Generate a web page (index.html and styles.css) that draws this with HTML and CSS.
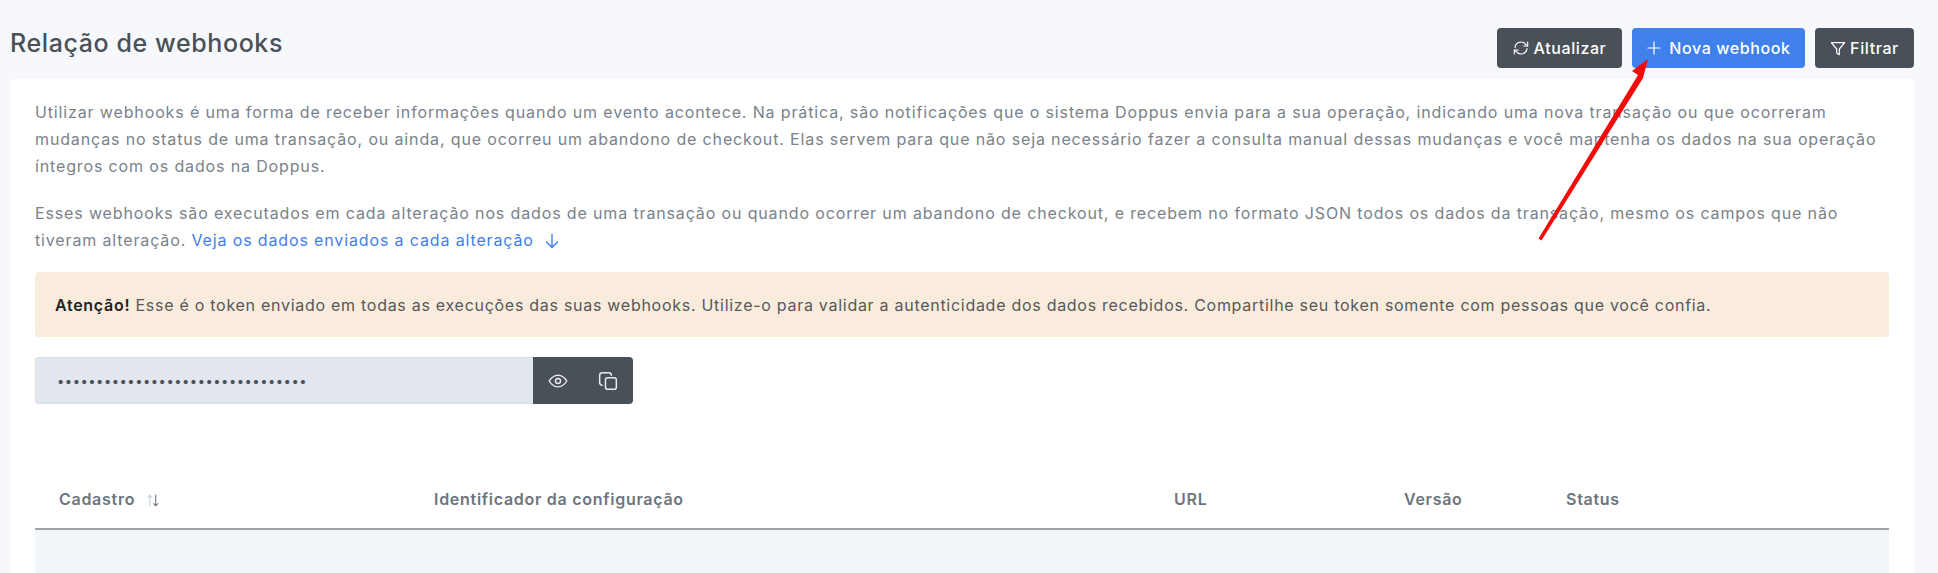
FILE: index.html
```html
<!DOCTYPE html>
<html lang="pt-BR">
<head>
    <meta charset="UTF-8">
    <meta name="viewport" content="width=device-width, initial-scale=1.0">
    <title>Relação de webhooks</title>
    <link rel="stylesheet" href="styles.css">
</head>
<body>
    <div class="page-header">
        <h1 class="page-title">Relação de webhooks</h1>
        <div class="actions">
            <button type="button" class="btn btn-dark btn-refresh">
                <svg class="btn-icon" viewBox="0 0 24 24" fill="none" stroke="currentColor" stroke-width="1.7" stroke-linecap="round" stroke-linejoin="round"><path d="M3 11a9 9 0 0 1 16-4.500L22 9"/><path d="M22 3v6h-6"/><path d="M21 13a9 9 0 0 1-16 4.500L2 15"/><path d="M2 21v-6h6"/></svg>
                Atualizar
            </button>
            <button type="button" class="btn btn-primary">
                <svg class="btn-icon" viewBox="0 0 16 16" fill="none" stroke="currentColor" stroke-width="1.2" stroke-linecap="round"><path d="M8 2v12M2 8h12"/></svg>
                Nova webhook
            </button>
            <button type="button" class="btn btn-dark btn-filter">
                <svg class="btn-icon" viewBox="0 0 24 24" fill="none" stroke="currentColor" stroke-width="1.8" stroke-linejoin="round"><path d="M2 4h20l-8 9.500V22l-4-2.500v-6z"/></svg>
                Filtrar
            </button>
        </div>
    </div>

    <div class="card">
        <p class="intro">Utilizar webhooks é uma forma de receber informações quando um evento acontece. Na prática, são notificações que o sistema Doppus envia para a sua operação, indicando uma nova transação ou que ocorreram mudanças no status de uma transação, ou ainda, que ocorreu um abandono de checkout. Elas servem para que não seja necessário fazer a consulta manual dessas mudanças e você mantenha os dados na sua operação íntegros com os dados na Doppus.</p>
        <p class="intro">Esses webhooks são executados em cada alteração nos dados de uma transação ou quando ocorrer um abandono de checkout, e recebem no formato JSON todos os dados da transação, mesmo os campos que não tiveram alteração. <a class="link" href="#dados">Veja os dados enviados a cada alteração <svg class="link-arrow" viewBox="0 0 16 16" fill="none" stroke="currentColor" stroke-width="1.4" stroke-linecap="round" stroke-linejoin="round"><path d="M8 1.500v13M2.500 9 8 14.500 13.500 9"/></svg></a></p>

        <div class="alert"><p class="alert-text"><strong>Atenção!</strong> Esse é o token enviado em todas as execuções das suas webhooks. Utilize-o para validar a autenticidade dos dados recebidos. Compartilhe seu token somente com pessoas que você confia.</p></div>

        <div class="token">
            <input class="token-input" type="password" value="abcdefghijklmnopqrstuvwxyz012345" readonly>
            <div class="token-actions">
                <svg class="token-icon" viewBox="0 0 24 24" fill="none" stroke="currentColor" stroke-width="1.7"><path d="M1.500 12S5.500 5 12 5s10.500 7 10.500 7-4 7-10.500 7S1.500 12 1.500 12z"/><circle cx="12" cy="12" r="3"/></svg>
                <svg class="token-icon" viewBox="0 0 24 24" fill="none" stroke="currentColor" stroke-width="1.8" stroke-linecap="round" stroke-linejoin="round"><rect x="9" y="8" width="13" height="14" rx="2.500"/><path d="M5 17a3 3 0 0 1-3-3V5a3 3 0 0 1 3-3h8a3 3 0 0 1 3 3"/></svg>
            </div>
        </div>

        <table class="hooks">
            <colgroup>
                <col class="col-date">
                <col class="col-id">
                <col class="col-url">
                <col class="col-version">
                <col class="col-status">
            </colgroup>
            <thead>
                <tr>
                    <th>Cadastro
                        <svg class="sort-icon" viewBox="0 0 14 14" fill="none" stroke-linecap="round"><path class="sort-up" d="M4.500 12V2M2.500 4l2-2 2 2"/><path class="sort-down" d="M10 2v10M8 10l2 2 2-2"/></svg>
                    </th>
                    <th>Identificador da configuração</th>
                    <th>URL</th>
                    <th>Versão</th>
                    <th>Status</th>
                </tr>
            </thead>
            <tbody>
                <tr><td colspan="5"></td></tr>
            </tbody>
        </table>
    </div>

    <svg class="annotation" viewBox="0 0 1938 573"><polygon fill="#f50a0a" points="1538.500,238.500 1541.500,240.500 1643,78 1648,59 1632,71 1638,75"/></svg>
</body>
</html>
```

FILE: styles.css
```css
* {
    box-sizing: border-box;
}
body {
    font-family: Inter, "Open Sans", sans-serif;
    font-size: 16px;
    letter-spacing: 0.72px;
    background-color: #f6f8fc;
    margin: 0;
    height: 573px;
    overflow: hidden;
    position: relative;
}
.page-header {
    display: flex;
    justify-content: space-between;
    align-items: flex-start;
    padding: 28px 24px 0 10px;
    height: 79px;
}
.page-title {
    margin: 0;
    font-size: 25px;
    line-height: 30px;
    font-weight: 500;
    letter-spacing: 0.6px;
    color: #495057;
}
.actions {
    display: flex;
    gap: 10px;
}
.btn {
    display: flex;
    align-items: center;
    justify-content: center;
    height: 40px;
    padding: 0;
    border: 1px solid transparent;
    border-radius: 4px;
    color: #fff;
    font-family: inherit;
    font-size: 16px;
    font-weight: 500;
    letter-spacing: 0.6px;
}
.btn-dark {
    background-color: #495057;
}
.btn-primary {
    background-color: #3f80ea;
    width: 173px;
    gap: 7px;
}
.btn-refresh {
    width: 125px;
    gap: 5px;
}
.btn-filter {
    width: 99px;
    gap: 4px;
}
.btn-icon {
    width: 16px;
    height: 16px;
    flex: none;
}
.card {
    background-color: #fff;
    margin: 0 24px 0 10px;
    padding: 20px 25px 0;
    border-radius: 4px 4px 0 0;
    height: 494px;
    overflow: hidden;
}
.intro {
    margin: 0;
    line-height: 27px;
    letter-spacing: 0.86px;
    color: #7a828a;
}
.intro + .intro {
    margin-top: 20px;
}
.link {
    color: #3f80ea;
    text-decoration: none;
}
.link-arrow {
    width: 16px;
    height: 16px;
    vertical-align: -3px;
    margin-left: 5px;
}
.alert {
    margin-top: 18px;
    height: 65px;
    padding: 0 20px;
    display: flex;
    align-items: center;
    background-color: #faecdc;
    border-radius: 4px;
    color: #56585c;
}
.alert-text {
    margin: 0;
}
.alert strong {
    color: #1f2226;
    font-weight: 600;
}
.token {
    display: flex;
    width: 598px;
    height: 47px;
    margin-top: 20px;
}
.token-input {
    flex: 1;
    min-width: 0;
    padding: 0 21px;
    background-color: #e2e6ee;
    border: 1px solid #d9dde5;
    border-right: 0;
    border-radius: 4px 0 0 4px;
    font-family: inherit;
    font-size: 13px;
    letter-spacing: 0.5px;
    color: #495057;
    outline: none;
}
.token-actions {
    display: flex;
    align-items: center;
    gap: 30px;
    width: 100px;
    padding-left: 15px;
    background-color: #495057;
    border-radius: 0 4px 4px 0;
    color: #e8eaec;
}
.token-icon {
    width: 20px;
    height: 20px;
    flex: none;
}
.hooks {
    width: 100%;
    margin-top: 66px;
    border-collapse: collapse;
    table-layout: fixed;
}
.col-date {
    width: 375px;
}
.col-id {
    width: 740px;
}
.col-url {
    width: 230px;
}
.col-version {
    width: 162px;
}
.hooks th {
    height: 59px;
    padding: 0 0 0 24px;
    border-bottom: 2px solid #9ca2a9;
    text-align: left;
    font-weight: 600;
    color: #6c757d;
}
.hooks td {
    height: 60px;
    background-color: #f3f6f9;
}
.sort-icon {
    width: 15px;
    height: 15px;
    margin-left: 5px;
    vertical-align: -3px;
}
.sort-up {
    stroke: #c3cdd6;
}
.sort-down {
    stroke: #6c757d;
}
.annotation {
    position: absolute;
    left: 0;
    top: 0;
    width: 1938px;
    height: 573px;
    pointer-events: none;
}
```
